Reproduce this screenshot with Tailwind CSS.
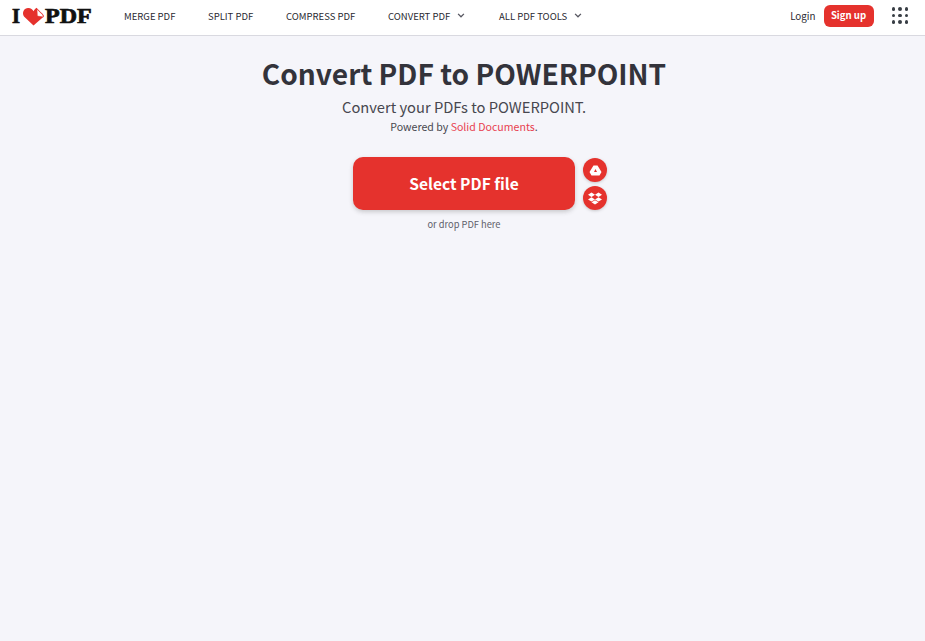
<!DOCTYPE html>
<html lang="en">
<head>
    <meta charset="UTF-8">
    <meta name="viewport" content="width=device-width, initial-scale=1.0">
    <title>Convert PDF to POWERPOINT</title>
    <script src="https://cdn.jsdelivr.net/npm/@tailwindcss/browser@4"></script>
</head>
<body class="bg-[#f5f5fa] min-h-screen font-['Noto_Sans_CJK_SC',sans-serif] text-[#33333b]">
    <!-- top bar -->
    <header class="h-[36px] pb-[2px] bg-white border-b border-[#d9d9e0] flex items-center">
        <a class="flex items-center ml-[12px] w-[82px] font-['Liberation_Serif',serif] font-bold text-[20.500px] leading-none text-[#111] [-webkit-text-stroke:0.7px_#111]">
            <span>I</span>
            <svg class="w-[25px] h-[19px] ml-[1px] -mr-[1px] mb-[1px] shrink-0" viewBox="0 0 25 22">
                <path d="M12.500 21.500 L1.500 11 C-1.500 6 2 1 6.500 1.200 C9.500 1.400 11.500 3 12.500 5 C13.500 3.500 14.500 2 16 1 L21 6 C23 7.500 24.500 9 24.500 11 Z" fill="#e5322d"/>
                <path d="M16.500 2.500 L23 9 L24 11.500 L17 10.500 Z" fill="#fff" stroke="#e5322d" stroke-width="0.600"/>
            </svg>
            <span class="inline-block origin-left scale-x-[1.17]">PDF</span>
        </a>
        <nav class="flex items-center ml-[30px] text-[9.500px] uppercase text-[#2a2a32]">
            <a class="w-[84px]">Merge PDF</a>
            <a class="w-[78px]">Split PDF</a>
            <a class="w-[102px]">Compress PDF</a>
            <a class="w-[111px] flex items-center">Convert PDF
                <svg class="w-[8px] h-[5px] ml-[7px] mb-[2px]" viewBox="0 0 9 6" fill="none" stroke="#55555f" stroke-width="1.500"><path d="M1 1 L4.500 4.500 L8 1"/></svg>
            </a>
            <a class="flex items-center">All PDF Tools
                <svg class="w-[8px] h-[5px] ml-[7px] mb-[2px]" viewBox="0 0 9 6" fill="none" stroke="#55555f" stroke-width="1.500"><path d="M1 1 L4.500 4.500 L8 1"/></svg>
            </a>
        </nav>
        <div class="ml-auto flex items-center">
            <a class="text-[9.800px] mr-[8px] text-[#2a2a32]">Login</a>
            <a class="w-[50px] h-[22px] mb-[2px] rounded-[6px] bg-[#e5322d] text-white text-[9.600px] font-bold flex items-center justify-center">Sign up</a>
            <div class="grid grid-cols-3 gap-[3px] ml-[18px] mr-[17px] mb-[2px]">
                <i class="w-[3.500px] h-[3.500px] rounded-full bg-[#383e45]"></i>
                <i class="w-[3.500px] h-[3.500px] rounded-full bg-[#383e45]"></i>
                <i class="w-[3.500px] h-[3.500px] rounded-full bg-[#383e45]"></i>
                <i class="w-[3.500px] h-[3.500px] rounded-full bg-[#383e45]"></i>
                <i class="w-[3.500px] h-[3.500px] rounded-full bg-[#383e45]"></i>
                <i class="w-[3.500px] h-[3.500px] rounded-full bg-[#383e45]"></i>
                <i class="w-[3.500px] h-[3.500px] rounded-full bg-[#383e45]"></i>
                <i class="w-[3.500px] h-[3.500px] rounded-full bg-[#383e45]"></i>
                <i class="w-[3.500px] h-[3.500px] rounded-full bg-[#383e45]"></i>
            </div>
        </div>
    </header>

    <main class="flex flex-col items-center pl-[3px]">
        <h1 class="mt-[18px] text-[28.100px] leading-[38px] font-semibold">Convert PDF to POWERPOINT</h1>
        <h2 class="mt-[3px] text-[14.700px] leading-[24px] text-[#47474f]">Convert your PDFs to POWERPOINT.</h2>
        <p class="mt-[1px] text-[10.600px] leading-[14px] text-[#47474f]">Powered by <a class="text-[#e8404f]">Solid Documents</a>.</p>

        <div class="relative mt-[23px]">
            <a class="w-[222px] h-[53px] rounded-[10px] bg-[#e5322d] text-white text-[15.600px] font-semibold flex items-center justify-center shadow-[0_2px_4px_rgba(72,72,72,0.25)]">Select PDF file</a>
            <div class="absolute left-[230px] top-[1px] flex flex-col gap-[4px]">
                <a class="w-[24px] h-[24px] rounded-full bg-[#e5322d] flex items-center justify-center shadow-[0_1px_3px_rgba(72,72,72,0.25)]">
                    <svg class="w-[13px] h-[11px]" viewBox="0 0 12 11" fill="#fff">
                        <path d="M4 0.500 H8 L12 7 L10 10.500 H2 L0 7 Z M6 4 L4.500 7 H7.500 Z" fill-rule="evenodd"/>
                    </svg>
                </a>
                <a class="w-[24px] h-[24px] rounded-full bg-[#e5322d] flex items-center justify-center shadow-[0_1px_3px_rgba(72,72,72,0.25)]">
                    <svg class="w-[14px] h-[13px]" viewBox="0 0 14 13" fill="#fff">
                        <path d="M3.500 0.500 L7 2.800 L3.500 5 L0 2.800 Z M10.500 0.500 L14 2.800 L10.500 5 L7 2.800 Z M3.500 5.200 L7 7.400 L3.500 9.600 L0 7.400 Z M10.500 5.200 L14 7.400 L10.500 9.600 L7 7.400 Z M3.500 10.300 L7 8.200 L10.500 10.300 L7 12.500 Z"/>
                    </svg>
                </a>
            </div>
        </div>
        <p class="mt-[7px] text-[9.300px] leading-[14px] text-[#5f5f6b]">or drop PDF here</p>
    </main>
</body>
</html>
